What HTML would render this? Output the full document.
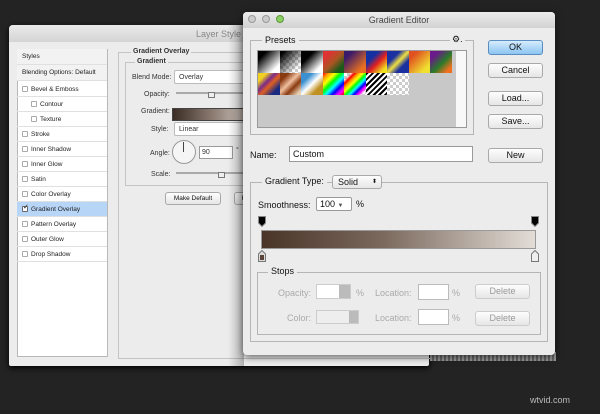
<!DOCTYPE html><html><head><style>
*{margin:0;padding:0;box-sizing:border-box}
body{width:600px;height:414px;background:#232323;position:relative;overflow:hidden;font-family:"Liberation Sans",sans-serif}
.a{position:absolute}
.row{position:absolute;left:17px;width:90px;height:15px;border-bottom:1px solid #e0e0e0;font-size:6.5px;line-height:15px;padding-left:5px;color:#222}
.cb{display:inline-block;width:6px;height:6px;border:1px solid #aaa;background:#fff;border-radius:1px;margin-right:3px;vertical-align:-1px}
.btn{position:absolute;background:linear-gradient(#fdfdfd,#e6e6e6);border:1px solid #a9a9a9;border-radius:3px;text-align:center;font-size:9px;color:#111}
.inp{position:absolute;background:#fff;border:1px solid #9a9a9a}
.t{position:absolute;font-size:9px;color:#111;white-space:nowrap}
.t.ls{font-size:7px;color:#333}
.g{position:absolute;border:1px solid #b5b5b5}
.chk{background-color:#fff;background-image:linear-gradient(45deg,#ccc 25%,transparent 25%,transparent 75%,#ccc 75%),linear-gradient(45deg,#ccc 25%,transparent 25%,transparent 75%,#ccc 75%);background-size:6px 6px;background-position:0 0,3px 3px}
.sw{position:absolute;width:21.5px;height:22px}
</style></head><body>
<div class="a" style="left:9px;top:25px;width:420px;height:341px;background:#ececec;border-radius:4px 4px 2px 2px;box-shadow:0 2px 6px #000"></div>
<div class="a" style="left:9px;top:25px;width:420px;height:17px;background:linear-gradient(#eaeaea,#d4d4d4);border-radius:4px 4px 0 0"></div>
<div class="t" style="left:196px;top:29px;color:#888">Layer Style</div>
<div class="a" style="left:17px;top:49px;width:91px;height:308px;background:#fff;border:1px solid #b8b8b8"></div>
<div class="row" style="top:49px;height:16px;background:#f2f2f2">Styles</div>
<div class="row" style="top:65px;height:16px;background:#f2f2f2">Blending Options: Default</div>
<div class="row" style="top:82px"><span class="cb"></span>Bevel &amp; Emboss</div>
<div class="row" style="top:97px;padding-left:14px"><span class="cb"></span>Contour</div>
<div class="row" style="top:112px;padding-left:14px"><span class="cb"></span>Texture</div>
<div class="row" style="top:127px"><span class="cb"></span>Stroke</div>
<div class="row" style="top:142px"><span class="cb"></span>Inner Shadow</div>
<div class="row" style="top:157px"><span class="cb"></span>Inner Glow</div>
<div class="row" style="top:172px"><span class="cb"></span>Satin</div>
<div class="row" style="top:187px"><span class="cb"></span>Color Overlay</div>
<div class="row" style="top:202px;background:#b7d5f7"><span class="cb" style="position:relative;border-color:#666"><span style="position:absolute;left:0;top:-3px;font-size:7px;line-height:7px">✓</span></span>Gradient Overlay</div>
<div class="row" style="top:217px"><span class="cb"></span>Pattern Overlay</div>
<div class="row" style="top:232px"><span class="cb"></span>Outer Glow</div>
<div class="row" style="top:247px"><span class="cb"></span>Drop Shadow</div>
<div class="g" style="left:118px;top:52px;width:320px;height:307px;border-color:#c4c4c4"></div>
<div class="t ls" style="left:131px;top:48px;background:#ececec;padding:0 2px;font-weight:bold">Gradient Overlay</div>
<div class="g" style="left:125px;top:62px;width:310px;height:124px;border-color:#c4c4c4"></div>
<div class="t ls" style="left:135px;top:58px;background:#ececec;padding:0 2px;font-weight:bold">Gradient</div>
<div class="t ls" style="left:132px;top:74px">Blend Mode:</div>
<div class="inp" style="left:174px;top:70px;width:80px;height:14px;border-color:#bbb;border-radius:2px"></div>
<div class="t ls" style="left:179px;top:74px">Overlay</div>
<div class="t ls" style="left:144px;top:91px">Opacity:</div>
<div class="a" style="left:176px;top:92px;width:70px;height:2px;background:#aaa"></div>
<div class="a" style="left:208px;top:92px;width:7px;height:6px;border:1px solid #777;background:#eee"></div>
<div class="t ls" style="left:141px;top:108px">Gradient:</div>
<div class="a" style="left:172px;top:108px;width:80px;height:13px;background:linear-gradient(90deg,#3b2c24,#8a7a70,#d8d0ca);border:1px solid #444"></div>
<div class="t ls" style="left:151px;top:126px">Style:</div>
<div class="inp" style="left:174px;top:122px;width:80px;height:14px;border-color:#bbb;border-radius:2px"></div>
<div class="t ls" style="left:179px;top:126px">Linear</div>
<div class="t ls" style="left:150px;top:150px">Angle:</div>
<div class="a" style="left:172px;top:140px;width:24px;height:24px;border-radius:50%;border:1px solid #999;background:#f5f5f5"></div>
<div class="a" style="left:183px;top:142px;width:1px;height:10px;background:#444"></div>
<div class="inp" style="left:199px;top:146px;width:34px;height:13px"></div>
<div class="t ls" style="left:202px;top:149px">90</div>
<div class="t ls" style="left:236px;top:147px">°</div>
<div class="t ls" style="left:151px;top:171px">Scale:</div>
<div class="a" style="left:176px;top:172px;width:70px;height:2px;background:#aaa"></div>
<div class="a" style="left:218px;top:172px;width:7px;height:6px;border:1px solid #777;background:#eee"></div>
<div class="btn" style="left:165px;top:192px;width:56px;height:13px;font-size:6.5px;line-height:11px">Make Default</div>
<div class="btn" style="left:234px;top:192px;width:20px;height:13px;font-size:6.5px;line-height:11px">R</div>
<div class="a" style="left:228px;top:25px;width:16px;height:341px;background:linear-gradient(90deg,rgba(0,0,0,0),rgba(0,0,0,.25))"></div>
<div class="a" style="left:430px;top:352px;width:126px;height:9px;background:repeating-linear-gradient(90deg,#999 0 2px,#666 2px 4px)"></div>
<div class="a" style="left:243px;top:12px;width:312px;height:343px;background:#ececec;border-radius:4px;box-shadow:0 2px 8px rgba(0,0,0,.6)"></div>
<div class="a" style="left:243px;top:12px;width:312px;height:16px;background:linear-gradient(#ececec,#d2d2d2);border-radius:4px 4px 0 0;font-size:9px;color:#444;text-align:center;line-height:16px">Gradient Editor</div>
<div class="a" style="left:248px;top:15px;width:8px;height:8px;border-radius:50%;background:#ccc;border:1px solid #999"></div>
<div class="a" style="left:262px;top:15px;width:8px;height:8px;border-radius:50%;background:#ccc;border:1px solid #999"></div>
<div class="a" style="left:276px;top:15px;width:8px;height:8px;border-radius:50%;background:#8ccf62;border:1px solid #5a9a3a"></div>
<div class="g" style="left:250px;top:40px;width:224px;height:95px"></div>
<div class="t" style="left:262px;top:35px;background:#ececec;padding:0 3px">Presets</div>
<div class="t" style="left:450px;top:34px;background:#ececec;padding:0 2px;font-size:9px">⚙.</div>
<div class="a" style="left:257px;top:50px;width:210px;height:78px;background:#c8c8c8;border:1px solid #999"></div>
<div class="a" style="left:456px;top:51px;width:10px;height:76px;background:#f8f8f8"></div>
<div class="sw" style="left:258px;top:51px;background:linear-gradient(135deg,#000 20%,#fff 80%)"></div>
<div class="sw chk" style="left:279.5px;top:51px"><div style="width:100%;height:100%;background:linear-gradient(135deg,#000 10%,transparent 80%)"></div></div>
<div class="sw" style="left:301px;top:51px;background:linear-gradient(135deg,#000 30%,#fff 80%)"></div>
<div class="sw" style="left:322.5px;top:51px;background:linear-gradient(135deg,#d33 20%,#a52 50%,#1a5a1a 80%)"></div>
<div class="sw" style="left:344px;top:51px;background:linear-gradient(135deg,#3a1a6a 20%,#e87020 80%)"></div>
<div class="sw" style="left:365.5px;top:51px;background:linear-gradient(135deg,#1530a0 30%,#e02020 55%,#f0e020 85%)"></div>
<div class="sw" style="left:387px;top:51px;background:linear-gradient(135deg,#1a30a0 30%,#f0e040 50%,#1a30a0 70%)"></div>
<div class="sw" style="left:408.5px;top:51px;background:linear-gradient(135deg,#e05020 20%,#f0e030 80%)"></div>
<div class="sw" style="left:430px;top:51px;background:linear-gradient(135deg,#6a1a8a 20%,#2a7a2a 55%,#f07020 85%)"></div>
<div class="sw" style="left:258px;top:73px;background:linear-gradient(135deg,#f0d020 20%,#7a2a8a 40%,#e06020 55%,#1a2a80 80%)"></div>
<div class="sw" style="left:279.5px;top:73px;background:linear-gradient(135deg,#8a3a10 20%,#f0c0a0 45%,#8a3a10 65%,#e8d0b0 90%)"></div>
<div class="sw" style="left:301px;top:73px;background:linear-gradient(135deg,#3a90d0 25%,#fff 50%,#c09020 75%)"></div>
<div class="sw" style="left:322.5px;top:73px;background:linear-gradient(135deg,red,orange,yellow,lime,cyan,blue,magenta,red)"></div>
<div class="sw chk" style="left:344px;top:73px"><div style="width:100%;height:100%;background:linear-gradient(135deg,transparent 15%,red,orange,yellow,lime,cyan,blue,magenta,transparent 90%)"></div></div>
<div class="sw" style="left:365.5px;top:73px;background:repeating-linear-gradient(135deg,#000 0 2px,#fff 2px 4px)"></div>
<div class="sw chk" style="left:387px;top:73px"></div>
<div class="t" style="left:250px;top:150px">Name:</div>
<div class="inp" style="left:289px;top:146px;width:184px;height:16px"></div>
<div class="t" style="left:293px;top:149px">Custom</div>
<div class="btn" style="left:488px;top:40px;width:55px;height:15px;line-height:13px;background:linear-gradient(#d6ecfd,#8cc4f2);border-color:#5a8ec0">OK</div>
<div class="btn" style="left:488px;top:63px;width:55px;height:15px;line-height:13px">Cancel</div>
<div class="btn" style="left:488px;top:91px;width:55px;height:15px;line-height:13px">Load...</div>
<div class="btn" style="left:488px;top:114px;width:55px;height:15px;line-height:13px">Save...</div>
<div class="btn" style="left:488px;top:148px;width:55px;height:15px;line-height:13px">New</div>
<div class="g" style="left:250px;top:182px;width:298px;height:160px"></div>
<div class="t" style="left:262px;top:176px;background:#ececec;padding:0 3px">Gradient Type:</div>
<div class="btn" style="left:332px;top:175px;width:50px;height:14px;line-height:12px;text-align:left;padding-left:5px;border-radius:3px">Solid <span style="position:absolute;right:4px;font-size:6px">⬍</span></div>
<div class="t" style="left:258px;top:200px">Smoothness:</div>
<div class="inp" style="left:316px;top:197px;width:36px;height:14px;border-radius:2px"></div>
<div class="t" style="left:320px;top:199px">100 <span style="font-size:6px;color:#555">▼</span></div>
<div class="t" style="left:356px;top:199px">%</div>
<svg class="a" style="left:258px;top:216px" width="8" height="11"><path d="M0.5 0.5H7.5V7L4 10.5L0.5 7Z" fill="#000" stroke="#888"/></svg>
<svg class="a" style="left:531px;top:216px" width="8" height="11"><path d="M0.5 0.5H7.5V7L4 10.5L0.5 7Z" fill="#000" stroke="#888"/></svg>
<div class="a" style="left:261px;top:230px;width:275px;height:19px;background:linear-gradient(90deg,#4a3428,#7c6a5e 45%,#e3ddd7);border:1px solid #999"></div>
<svg class="a" style="left:258px;top:250px" width="8" height="12"><path d="M4 0.5L7.5 4V11.5H0.5V4Z" fill="#ddd" stroke="#777"/><rect x="2" y="5" width="4" height="5" fill="#5a4438"/></svg>
<svg class="a" style="left:531px;top:250px" width="8" height="12"><path d="M4 0.5L7.5 4V11.5H0.5V4Z" fill="#eee" stroke="#777"/></svg>
<div class="g" style="left:257px;top:272px;width:284px;height:63px"></div>
<div class="t" style="left:268px;top:266px;background:#ececec;padding:0 3px">Stops</div>
<div class="t" style="left:278px;top:288px;color:#aaa">Opacity:</div>
<div class="inp" style="left:316px;top:284px;width:35px;height:15px;border-color:#ccc"><div style="position:absolute;right:0;top:0;width:11px;height:13px;background:#bbb"></div></div>
<div class="t" style="left:356px;top:288px;color:#aaa">%</div>
<div class="t" style="left:375px;top:288px;color:#aaa">Location:</div>
<div class="inp" style="left:418px;top:284px;width:31px;height:16px;border-color:#bbb"></div>
<div class="t" style="left:452px;top:288px;color:#aaa">%</div>
<div class="btn" style="left:475px;top:284px;width:55px;height:15px;line-height:13px;color:#999;border-color:#ccc">Delete</div>
<div class="t" style="left:287px;top:313px;color:#aaa">Color:</div>
<div class="inp" style="left:316px;top:310px;width:43px;height:14px;border-color:#ccc;background:#eee"><div style="position:absolute;right:0;top:0;width:9px;height:12px;background:#bbb"></div></div>
<div class="t" style="left:375px;top:313px;color:#aaa">Location:</div>
<div class="inp" style="left:418px;top:309px;width:31px;height:16px;border-color:#bbb"></div>
<div class="t" style="left:452px;top:313px;color:#aaa">%</div>
<div class="btn" style="left:475px;top:311px;width:55px;height:15px;line-height:13px;color:#999;border-color:#ccc">Delete</div>
<div class="t" style="left:530px;top:395px;font-size:9px;color:#bbb">wtvid.com</div>
</body></html>
